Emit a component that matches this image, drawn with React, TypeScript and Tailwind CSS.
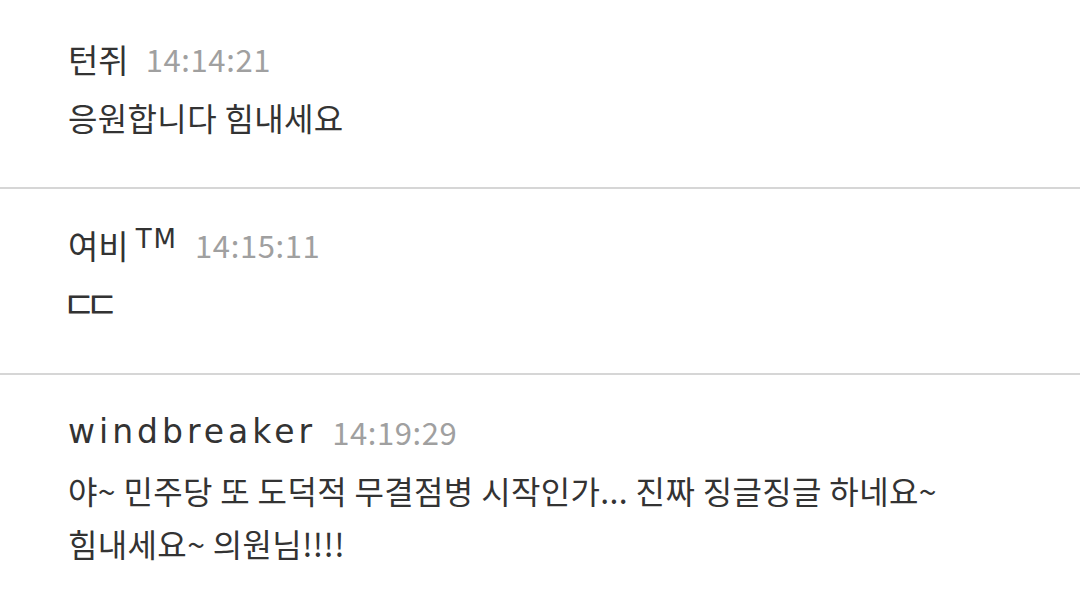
import React from "react";

const KR = '"Noto Sans CJK KR", "Noto Sans", sans-serif';
const LAT = '"DejaVu Sans", "Noto Sans CJK KR", sans-serif';

type Item = {
  name: React.ReactNode;
  time: string;
  timeGap: string;
  body: React.ReactNode;
  cls: string;
};

const items: Item[] = [
  {
    name: <span className="text-[33px]">턴쥐</span>,
    time: "14:14:21",
    timeGap: "ml-[17px]",
    body: <div>응원합니다 힘내세요</div>,
    cls: "h-[189px] pt-[36px] border-b-2 border-[#d6d6d6]",
  },
  {
    name: (
      <span className="text-[33px] flex items-start">
        여비
        <span
          className="text-[26px] leading-[26px] tracking-[2px] ml-[7px] self-start mt-[4px]"
          style={{ fontFamily: LAT }}
        >
          TM
        </span>
      </span>
    ),
    time: "14:15:11",
    timeGap: "ml-[17px]",
    body: <div className="text-[37px] tracking-[-11px] ml-[-6px]">ㄷㄷ</div>,
    cls: "h-[186px] pt-[33px] border-b-2 border-[#d6d6d6]",
  },
  {
    name: (
      <span className="text-[33px] tracking-[4px]" style={{ fontFamily: LAT }}>
        windbreaker
      </span>
    ),
    time: "14:19:29",
    timeGap: "ml-[16px]",
    body: (
      <>
        <div>야~ 민주당 또 도덕적 무결점병 시작인가... 진짜 징글징글 하네요~</div>
        <div>힘내세요~ 의원님!!!!</div>
      </>
    ),
    cls: "h-[224px] pt-[34px]",
  },
];

export default function App() {
  return (
    <div
      className="w-[1080px] h-[599px] overflow-hidden bg-white text-[#333333]"
      style={{ fontFamily: KR }}
    >
      {items.map((it, i) => (
        <div key={i} className={`px-[68px] ${it.cls}`}>
          <div className="flex items-center h-[46px] leading-[46px]">
            {it.name}
            <span className={`text-[31px] tracking-[0.6px] text-[#a0a0a0] ${it.timeGap}`}>{it.time}</span>
          </div>
          <div className="mt-[9px] text-[32px] tracking-[0.35px] leading-[53px]">{it.body}</div>
        </div>
      ))}
    </div>
  );
}
